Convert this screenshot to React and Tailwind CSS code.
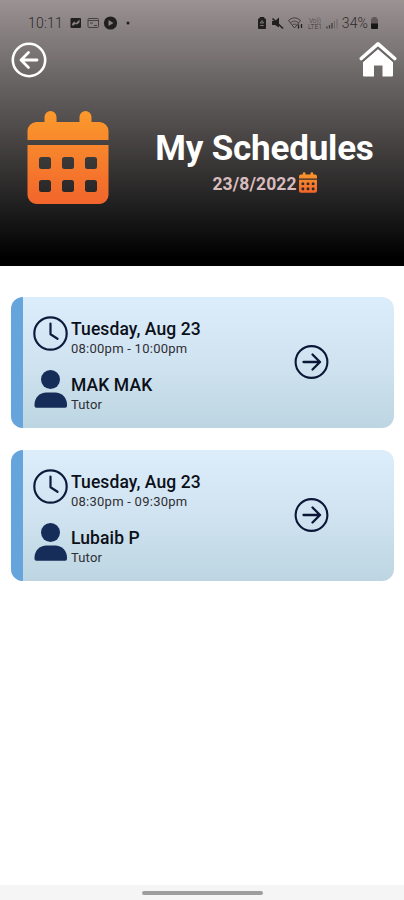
const schedules = [
  { id: 1, day: 'Tuesday, Aug 23', time: '08:00pm - 10:00pm', name: 'MAK MAK', role: 'Tutor' },
  { id: 2, day: 'Tuesday, Aug 23', time: '08:30pm - 09:30pm', name: 'Lubaib P', role: 'Tutor' },
]

function CalendarIcon({ id, className }) {
  return (
    <svg viewBox="0 0 81 93" className={className} fill={`url(#${id})`}>
      <defs>
        <linearGradient id={id} gradientUnits="userSpaceOnUse" x1="0" y1="0" x2="0" y2="93">
          <stop offset="0" stopColor="#fb9a2c" />
          <stop offset="1" stopColor="#f2652c" />
        </linearGradient>
      </defs>
      <path d="M0 29V20a9 9 0 0 1 9-9h8V6a6 6 0 0 1 12 0v5h23V6a6 6 0 0 1 12 0v5h8a9 9 0 0 1 9 9v9z" />
      <path
        fillRule="evenodd"
        d="M0 34h81v50a9 9 0 0 1-9 9H9a9 9 0 0 1-9-9zM14 46a2.500 2.500 0 0 0-2.500 2.500v7a2.500 2.500 0 0 0 2.500 2.500h7a2.500 2.500 0 0 0 2.500-2.500v-7a2.500 2.500 0 0 0-2.500-2.500zm23 0a2.500 2.500 0 0 0-2.500 2.500v7a2.500 2.500 0 0 0 2.500 2.500h7a2.500 2.500 0 0 0 2.500-2.500v-7a2.500 2.500 0 0 0-2.500-2.500zm23 0a2.500 2.500 0 0 0-2.500 2.500v7a2.500 2.500 0 0 0 2.500 2.500h7a2.500 2.500 0 0 0 2.500-2.500v-7a2.500 2.500 0 0 0-2.500-2.500zM14 69a2.500 2.500 0 0 0-2.500 2.500v7a2.500 2.500 0 0 0 2.500 2.500h7a2.500 2.500 0 0 0 2.500-2.500v-7a2.500 2.500 0 0 0-2.500-2.500zm23 0a2.500 2.500 0 0 0-2.500 2.500v7a2.500 2.500 0 0 0 2.500 2.500h7a2.500 2.500 0 0 0 2.500-2.500v-7a2.500 2.500 0 0 0-2.500-2.500zm23 0a2.500 2.500 0 0 0-2.500 2.500v7a2.500 2.500 0 0 0 2.500 2.500h7a2.500 2.500 0 0 0 2.500-2.500v-7a2.500 2.500 0 0 0-2.500-2.500z"
      />
    </svg>
  )
}

function StatusBar() {
  return (
    <div className="flex h-[38px] items-center justify-between pt-2 pr-[25px] pl-[28px] text-[14px] font-light text-[#2e2a2a]">
      <div className="flex items-center">
        <span className="w-[42px] tracking-[0.2px]">10:11</span>
        <svg className="h-[14px] w-[60px]" viewBox="0 0 60 14">
          <rect x="0.500" y="2" width="10.500" height="10" rx="1" fill="#211f1f" />
          <path d="M2 8l2-2.500L6 7l3.500-3.500v3L7 8.500 5.500 8 2.500 10z" fill="#8a8282" />
          <rect x="18" y="2.500" width="10.500" height="9" rx="1" fill="none" stroke="#454040" />
          <path d="M18 4.500h10.500M20 7h3M24 9.500h3" stroke="#454040" fill="none" />
          <circle cx="40.500" cy="7" r="6.600" fill="#211f1f" />
          <path d="M38.500 4l5 3-5 3z" fill="#8a8282" />
          <circle cx="58" cy="7" r="1.500" fill="#211f1f" />
        </svg>
      </div>
      <div className="flex items-center">
        <svg className="mr-px h-[14px] w-[85px]" viewBox="0 0 85 14" fill="none" stroke="#393535">
          <path d="M4 1.500h4V3h1.500v9.500h-7V3H4z" fill="#211f1f" stroke="#211f1f" />
          <path d="M6 4.500L4.300 7h3.400zM4.300 9.500h3.400" stroke="#8a8282" strokeWidth="0.900" />
          <path d="M16 5h3l4-3.500v10L19 9h-3z" fill="#211f1f" stroke="none" />
          <path d="M16.500 2.500l10.500 10" stroke="#211f1f" strokeWidth="1.600" />
          <path d="M32.500 4.500c4-3.500 8-3.500 12 0M34.500 6.800c2.700-2.200 5.300-2.200 8 0M36.500 9c1.500-1.200 2.800-1.200 4 0M32.500 4.500l6 7.500 6-7.500" strokeWidth="0.900" />
          <path d="M42.500 8.500v4M45.500 12V8" stroke="#211f1f" strokeWidth="1.300" />
          <g stroke="none" fill="#393535" className="font-['Roboto',sans-serif] text-[6.500px]">
            <text x="53" y="6.500">Vo))</text>
            <text x="52" y="13">LTE1</text>
          </g>
          <path d="M71 12.500v-2M73.500 12.500V9M76 12.500V7" strokeWidth="1.200" />
          <path d="M78.500 12.500V5M81 12.500V3" stroke="#6c6666" />
        </svg>
        <span className="tracking-[0.1px]">34%</span>
        <svg className="ml-[2px] h-3 w-[9px]" viewBox="0 0 9 12">
          <path d="M2.500 0h4v1.500H8V7H1V1.500h1.500z" fill="#605959" />
          <path d="M1 6.500h7V11q0 1-1 1H2q-1 0-1-1z" fill="#181717" />
        </svg>
      </div>
    </div>
  )
}

function Header() {
  return (
    <header className="flex h-[265.500px] flex-col bg-[linear-gradient(to_bottom,#9b9292_0%,#646060_33%,#454241_54%,#222121_76%,#000_97%)]">
      <StatusBar />
      <nav className="flex h-[42px] items-start justify-between pr-[7px] pl-[11px]">
        <button aria-label="Back" className="mt-[4px]">
          <svg className="block size-[36px]" viewBox="0 0 36 36" fill="none" stroke="#fff" strokeLinecap="round" strokeLinejoin="round">
            <circle cx="18" cy="18" r="16.200" strokeWidth="2.600" />
            <path d="M26 18H10M17.500 10.500L10 18l7.500 7.500" strokeWidth="2.800" />
          </svg>
        </button>
        <button aria-label="Home" className="mt-[3px]">
          <svg className="block h-[36px] w-[38px]" viewBox="0 0 38 36">
            <path d="M4 21L19 8l15 13v13.500q0 1-1 1h-9.500v-11h-8.500v11H5q-1 0-1-1z" fill="#fff" />
            <path d="M2.800 19.800L19 5.800l16.200 14" fill="none" stroke="#6c6767" strokeWidth="3.400" />
            <path d="M2.300 17.500L19 2.800l16.700 14.700" fill="none" stroke="#fff" strokeWidth="3.600" strokeLinecap="round" strokeLinejoin="round" />
          </svg>
        </button>
      </nav>
      <div className="flex pt-[31px] pl-[27px]">
        <CalendarIcon id="calendar-large" className="h-[93px] w-[82px]" />
        <div className="ml-[45.500px] flex w-[220px] flex-col items-center pt-[18px]">
          <h1 className="text-[35px] leading-[40px] font-bold tracking-[-0.2px] whitespace-nowrap text-white">My Schedules</h1>
          <div className="mt-px flex items-center gap-[2px]">
            <span className="text-[17.500px] leading-[28px] font-bold tracking-[0.1px] text-[#d8bcbd]">23/8/2022</span>
            <CalendarIcon id="calendar-small" className="mb-[3px] h-[21px] w-[18px]" />
          </div>
        </div>
      </div>
    </header>
  )
}

function ScheduleCard({ schedule }) {
  return (
    <article className="flex h-[131px] overflow-hidden rounded-[12px] bg-linear-to-b from-[#dcedfb] via-[#d0e3f0] to-[#bdd5e2]">
      <div className="w-[12px] bg-[#66a5dc]" />
      <div className="w-[271px] pt-[19px] pl-[10px]">
        <div className="flex h-[54px]">
          <svg className="mr-[3px] size-[35px] shrink-0" viewBox="0 0 35 35" fill="none" stroke="#0d1b3c" strokeWidth="2.200" strokeLinecap="round" strokeLinejoin="round">
            <circle cx="17.500" cy="17.500" r="16.200" />
            <path d="M17.500 7.500v10.800l7 4.500" />
          </svg>
          <div>
            <h2 className="mt-[3px] text-[17.500px] leading-[20px] font-medium tracking-[0.1px] text-[#0b1018]">{schedule.day}</h2>
            <p className="text-[13px] leading-[20px] tracking-[0.25px] text-[#302f35]">{schedule.time}</p>
          </div>
        </div>
        <div className="flex">
          <svg className="mr-[3px] h-[38px] w-[35px] shrink-0" viewBox="0 0 35 38" fill="#152d58">
            <circle cx="17.500" cy="9.500" r="9.500" />
            <path d="M1.500 36v-1.500c0-6.500 5-12 12-12h8.500c7 0 12 5.500 12 12V36q0 1.800-1.800 1.800H3.300Q1.500 37.800 1.500 36z" />
          </svg>
          <div>
            <h3 className="mt-[5px] text-[17.500px] leading-[20px] font-medium tracking-[0.1px] text-[#0b1018]">{schedule.name}</h3>
            <p className="text-[13px] leading-[20px] tracking-[0.15px] text-[#302f35]">{schedule.role}</p>
          </div>
        </div>
      </div>
      <button aria-label="Open schedule" className="self-center">
        <svg className="block size-[35px]" viewBox="0 0 35 35" fill="none" stroke="#0c1738" strokeWidth="2.100" strokeLinecap="round" strokeLinejoin="round">
          <circle cx="17.500" cy="17" r="15.900" />
          <path d="M9.500 17H26M18.500 9.500L26 17l-7.500 7.500" strokeWidth="2.300" />
        </svg>
      </button>
    </article>
  )
}

export default function App() {
  return (
    <div className="flex h-[900px] w-[404px] flex-col overflow-hidden bg-white font-['Roboto',sans-serif]">
      <Header />
      <main className="flex flex-1 flex-col gap-[22.400px] pt-[31.500px] pr-[10px] pl-[11px]">
        {schedules.map((schedule) => (
          <ScheduleCard key={schedule.id} schedule={schedule} />
        ))}
      </main>
      <footer className="flex h-[15px] justify-center bg-[#f5f5f5] pt-[6px]">
        <div className="h-[4px] w-[121px] rounded-full bg-[#9d9d9d]" />
      </footer>
    </div>
  )
}
